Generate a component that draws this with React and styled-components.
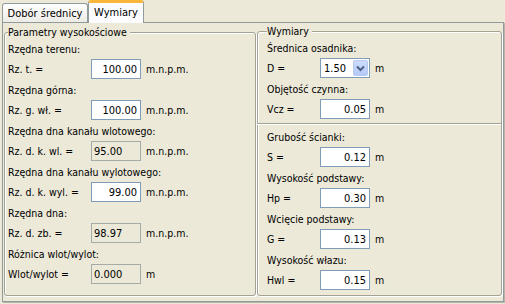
import React from "react"
import styled, { createGlobalStyle } from "styled-components"

const GlobalStyle = createGlobalStyle`
  html, body { margin: 0; padding: 0; background: #ece9d8; }
  body {
    font-family: "DejaVu Sans Condensed", "Liberation Sans", sans-serif;
    font-size: 10.5px;
    color: #000;
  }
`

const Window = styled.div`
  width: 505px;
  height: 304px;
  box-sizing: border-box;
  padding: 0 1px 0 2px;
  display: flex;
  flex-direction: column;
  overflow: hidden;
`

const TabStrip = styled.div`
  display: flex;
  align-items: flex-end;
  height: 22px;
  position: relative;
  z-index: 1;
`

const Tab = styled.div`
  box-sizing: border-box;
  width: ${p => p.$width}px;
  height: ${p => (p.$active ? 23 : 19)}px;
  margin-bottom: ${p => (p.$active ? -1 : 0)}px;
  padding-bottom: ${p => (p.$active ? 2 : 0)}px;
  display: flex;
  align-items: center;
  justify-content: center;
  border: 1px solid #919b9c;
  border-bottom: none;
  border-top: ${p => (p.$active ? "3px solid #f9b63a" : "1px solid #919b9c")};
  border-radius: 3px 3px 0 0;
  background: ${p => (p.$active ? "#fcfcfe" : "linear-gradient(#ffffff, #ecebe6)")};
  font-size: 11px;
  white-space: nowrap;
`

const Panel = styled.div`
  height: 280px;
  box-sizing: border-box;
  border: 1px solid #919b9c;
  box-shadow: 1px 1px 0 #b8b5a6;
  display: flex;
  gap: 1px;
  padding: 2px 1px 5px 1px;
`

const Group = styled.fieldset`
  margin: 0;
  margin-top: ${p => p.$top || 0}px;
  width: ${p => p.$width}px;
  min-width: 0;
  box-sizing: border-box;
  border: 1px solid #a3a297;
  border-radius: 3px;
  box-shadow: inset 1px 1px 0 #fff, 1px 1px 0 #fff;
  padding: 0 4px 0 ${p => p.$pad}px;
  display: flex;
  flex-direction: column;
`

const Legend = styled.legend`
  padding: 0 3px 0 0;
  line-height: 14px;
  background: #ece9d8;
  white-space: nowrap;
`

const Caption = styled.div`
  height: 19px;
  display: flex;
  align-items: center;
  white-space: nowrap;
`

const Row = styled.div`
  height: 22px;
  display: grid;
  grid-template-columns: ${p => p.$label}px 50px auto;
  column-gap: 5px;
  align-items: center;
  white-space: nowrap;
`

const Field = styled.input`
  width: 50px;
  height: 20px;
  box-sizing: border-box;
  margin: 0;
  border: 1px solid ${p => (p.readOnly ? "#a5aca8" : "#7f9db9")};
  background: ${p => (p.readOnly ? "#ece9d8" : "#fff")};
  padding: 0 3px 0 2px;
  font: inherit;
  font-size: 11px;
  color: #000;
  text-align: ${p => (p.readOnly ? "left" : "right")};
  outline: none;
`

const Combo = styled.div`
  width: 50px;
  height: 20px;
  box-sizing: border-box;
  border: 1px solid #7f9db9;
  background: #fff;
  display: flex;
  align-items: center;
  padding: 0 1px 0 3px;
  font-size: 11px;
`

const ComboButton = styled.span`
  margin-left: auto;
  width: 15px;
  height: 16px;
  box-sizing: border-box;
  border: 1px solid #b7c9f1;
  border-radius: 2px;
  background: linear-gradient(#cddcfd, #b4c9f6);
  display: flex;
  align-items: center;
  justify-content: center;
`

const Separator = styled.div`
  height: 0;
  border-top: 1px solid #a3a297;
  border-bottom: 1px solid #fff;
  margin: 3px -4px 2px -10px;
`

const heights = [
  ["Rzędna terenu:", "Rz. t. =", "100.00", false],
  ["Rzędna górna:", "Rz. g. wł. =", "100.00", false],
  ["Rzędna dna kanału wlotowego:", "Rz. d. k. wl. =", "95.00", true],
  ["Rzędna dna kanału wylotowego:", "Rz. d. k. wyl. =", "99.00", false],
  ["Rzędna dna:", "Rz. d. zb. =", "98.97", true],
]

const walls = [
  ["Grubość ścianki:", "S =", "0.12"],
  ["Wysokość podstawy:", "Hp =", "0.30"],
  ["Wcięcie podstawy:", "G =", "0.13"],
  ["Wysokość włazu:", "Hwl =", "0.15"],
]

const Chevron = () => (
  <svg width="9" height="7" viewBox="0 0 9 7">
    <path d="M1 1.5 L4.5 5 L8 1.5" fill="none" stroke="#4d6185" strokeWidth="2" />
  </svg>
)

export default () => (
  <Window>
    <GlobalStyle />
    <TabStrip>
      <Tab $width={86}>Dobór średnicy</Tab>
      <Tab $width={56} $active>Wymiary</Tab>
    </TabStrip>
    <Panel>
      <Group $width={252} $pad={3}>
        <Legend>Parametry wysokościowe</Legend>
        {heights.map(([caption, label, value, readOnly]) => (
          <React.Fragment key={label}>
            <Caption>{caption}</Caption>
            <Row $label={78}>
              <span>{label}</span>
              <Field readOnly={readOnly} defaultValue={value} />
              <span>m.n.p.m.</span>
            </Row>
          </React.Fragment>
        ))}
        <Caption>Różnica wlot/wylot:</Caption>
        <Row $label={78}>
          <span>Wlot/wylot =</span>
          <Field readOnly defaultValue="0.000" />
          <span>m</span>
        </Row>
      </Group>
      <Group $width={245} $pad={9} $top={-1}>
        <Legend>Wymiary</Legend>
        <Caption>Średnica osadnika:</Caption>
        <Row $label={48}>
          <span>D =</span>
          <Combo>
            1.50
            <ComboButton>
              <Chevron />
            </ComboButton>
          </Combo>
          <span>m</span>
        </Row>
        <Caption>Objętość czynna:</Caption>
        <Row $label={48}>
          <span>Vcz =</span>
          <Field defaultValue="0.05" />
          <span>m</span>
        </Row>
        <Separator />
        {walls.map(([caption, label, value]) => (
          <React.Fragment key={label}>
            <Caption>{caption}</Caption>
            <Row $label={48}>
              <span>{label}</span>
              <Field defaultValue={value} />
              <span>m</span>
            </Row>
          </React.Fragment>
        ))}
      </Group>
    </Panel>
  </Window>
)
